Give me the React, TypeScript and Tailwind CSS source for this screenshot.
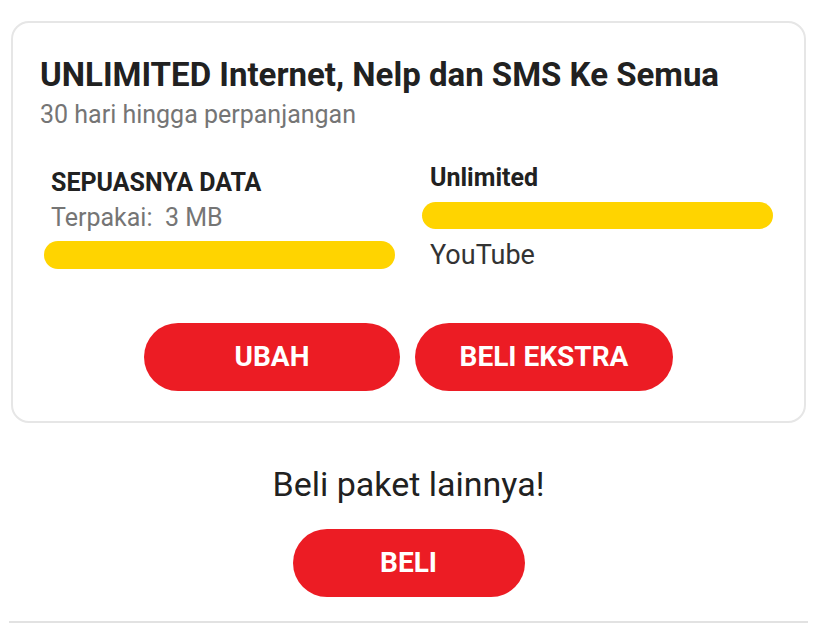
import React from "react";

type Quota = { title: string; used?: string; label?: string };

const left: Quota = { title: "SEPUASNYA DATA", used: "Terpakai:  3 MB" };
const right: Quota = { title: "Unlimited", label: "YouTube" };

function Bar({ h = "h-[28px]" }: { h?: string }) {
  return <div className={`w-full ${h} rounded-full bg-[#ffd400]`} />;
}

function RedButton({ label, w }: { label: string; w: string }) {
  return (
    <button
      className={`${w} h-[68px] rounded-full bg-[#ec1c24] text-white text-[28px] font-bold leading-none`}
    >
      {label}
    </button>
  );
}

export default function App() {
  return (
    <div className="w-[817px] h-[634px] bg-white pt-[21px] font-['Roboto',sans-serif] text-[#212121] overflow-hidden">
      {/* package card */}
      <div className="ml-[11px] w-[795px] border-2 border-[#e6e6e6] rounded-[18px] px-[27px] pt-[33px] pb-[30px]">
        <div className="text-[33px] leading-[38px] font-bold">
          UNLIMITED Internet, Nelp dan SMS Ke Semua
        </div>
        <div className="mt-[7px] text-[25px] leading-[28px] text-[#757575]">
          30 hari hingga perpanjangan
        </div>

        <div className="mt-[35px] px-[4px] grid grid-cols-2 gap-x-[27px]">
          <div className="pt-[5px]">
            <div className="pl-[7px] text-[25px] leading-[28px] font-bold">{left.title}</div>
            <div className="pl-[7px] mt-[7px] text-[25px] leading-[28px] text-[#757575] whitespace-pre">
              {left.used}
            </div>
            <div className="mt-[9px]">
              <Bar />
            </div>
          </div>
          <div>
            <div className="pl-[8px] text-[25px] leading-[28px] font-bold">{right.title}</div>
            <div className="mt-[10px]">
              <Bar h="h-[27px]" />
            </div>
            <div className="pl-[8px] mt-[11px] text-[27px] leading-[30px] text-[#333]">
              {right.label}
            </div>
          </div>
        </div>

        <div className="mt-[53px] flex justify-center gap-[15px]">
          <RedButton label="UBAH" w="w-[256px]" />
          <RedButton label="BELI EKSTRA" w="w-[258px]" />
        </div>
      </div>

      <div className="mt-[41px] text-center text-[34px] leading-[40px] text-[#212121]">
        Beli paket lainnya!
      </div>
      <div className="mt-[25px] flex justify-center">
        <RedButton label="BELI" w="w-[232px]" />
      </div>
      <div className="mt-[24px] mx-[9px] h-[2px] bg-[#e2e2e2]" />
    </div>
  );
}
